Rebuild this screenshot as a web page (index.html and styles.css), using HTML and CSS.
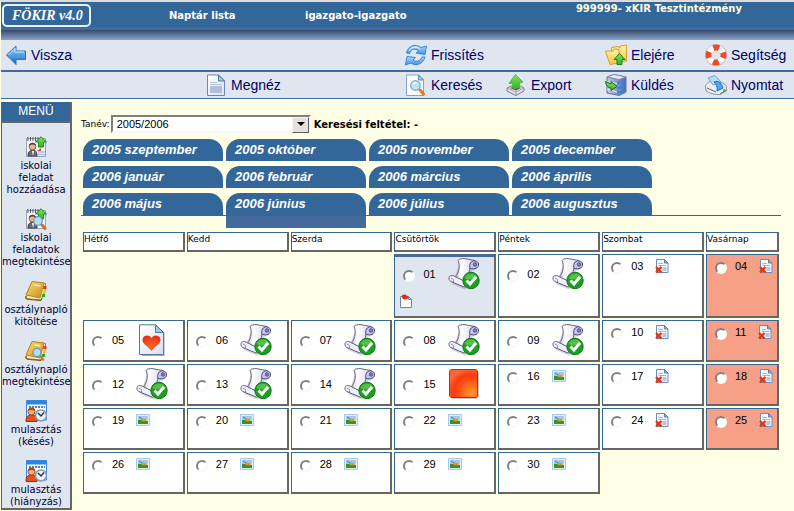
FILE: index.html
```html
<!DOCTYPE html>
<html lang="hu">
<head>
    <meta charset="UTF-8">
    <meta name="viewport" content="width=device-width, initial-scale=1.0">
    <title>FÖKIR v4.0 - Naptár lista</title>
    <link rel="stylesheet" href="styles.css">
</head>
<body>
    <!-- Icon set -->
    <svg class="icon-set" aria-hidden="true">
        <defs>
            <linearGradient id="g-blue" x1="0" y1="0" x2="0" y2="1"><stop offset="0" stop-color="#9bd4fb"/><stop offset="1" stop-color="#1368c4"/></linearGradient>
            <linearGradient id="g-sky" x1="0" y1="0" x2="0" y2="1"><stop offset="0" stop-color="#b4dffc"/><stop offset="1" stop-color="#3c93e4"/></linearGradient>
            <linearGradient id="g-gold" x1="0" y1="0" x2="0" y2="1"><stop offset="0" stop-color="#fff3a0"/><stop offset="1" stop-color="#f3c544"/></linearGradient>
            <linearGradient id="g-book" x1="0" y1="0" x2="1" y2="1"><stop offset="0" stop-color="#fbe27c"/><stop offset="1" stop-color="#c98a12"/></linearGradient>
            <linearGradient id="g-green" x1="0" y1="0" x2="0" y2="1"><stop offset="0" stop-color="#8be05c"/><stop offset="1" stop-color="#2fb52a"/></linearGradient>
            <linearGradient id="g-page" x1="0" y1="0" x2="1" y2="1"><stop offset="0" stop-color="#ffffff"/><stop offset="1" stop-color="#d5e2f4"/></linearGradient>
            <linearGradient id="g-paper" x1="0" y1="0" x2="1" y2="0"><stop offset="0" stop-color="#b9b9d0"/><stop offset="0.35" stop-color="#ffffff"/><stop offset="1" stop-color="#d2d2e4"/></linearGradient>
            <linearGradient id="g-server" x1="0" y1="0" x2="1" y2="0"><stop offset="0" stop-color="#c4cbe4"/><stop offset="1" stop-color="#5566a0"/></linearGradient>
            <radialGradient id="g-red" cx="0.8" cy="0.85" r="0.9"><stop offset="0" stop-color="#ff9a30"/><stop offset="0.45" stop-color="#ff5a18"/><stop offset="0.75" stop-color="#fb3a0c"/><stop offset="1" stop-color="#f8683c"/></radialGradient>
            <radialGradient id="g-heart" cx="0.5" cy="0.7" r="0.7"><stop offset="0" stop-color="#ff6a20"/><stop offset="1" stop-color="#ee2a10"/></radialGradient>
        </defs>
        <symbol id="i-back" viewBox="0 0 22 22">
            <path d="M1.500 11 11 2V7H20.500V15.500H11V20.500Z" fill="url(#g-blue)" stroke="#2a74c8"/>
            <path d="M3.500 11 10 4.500V8H19" fill="none" stroke="#c6e6ff"/>
        </symbol>
        <symbol id="i-refresh" viewBox="0 0 22 22">
            <path d="M1.500 9C3 2 10 -1 16 3.500L21.500 2 20 10.500 11 9 14 7C10 4 6 4.500 4.500 9.500Z" fill="url(#g-sky)" stroke="#3583d6"/>
            <path d="M20 13C18 20 11 22.500 6 19L.5 21 2 12.500 10.500 13.500 8 16C11 18.500 15 17.500 17 13Z" fill="url(#g-sky)" stroke="#3583d6"/>
            <path d="M4 7C7 2.500 12 2 15 5" fill="none" stroke="#e2f4ff"/>
        </symbol>
        <symbol id="i-up" viewBox="0 0 22 22">
            <path d="M6.500 3.500 13 2.500 15 4V2L21.500 1V17L8 19Z" fill="url(#g-gold)" stroke="#d2a02c"/>
            <path d="M.5 7H8L9.500 5 14 5.500V19L5 20.500Z" fill="url(#g-gold)" stroke="#d2a02c"/>
            <path d="M14.500 9.500 20 15.500H17V20.500H12V15.500H9Z" fill="url(#g-green)" stroke="#16801a"/>
        </symbol>
        <symbol id="i-help" viewBox="0 0 22 22">
            <circle cx="11" cy="11" r="7.700" fill="none" stroke="#b8b8c4" stroke-width="6.600"/>
            <circle cx="11" cy="11" r="7.500" fill="none" stroke="#fcfcfc" stroke-width="5.800"/>
            <circle cx="11" cy="11" r="7.500" fill="none" stroke="#f0482a" stroke-width="5.800" stroke-dasharray="5.890 5.890" stroke-dashoffset="2.900"/>
        </symbol>
        <symbol id="i-page" viewBox="0 0 22 22">
            <path d="M2.500 1H13.500L19.500 7V21.500H2.500Z" fill="url(#g-page)" stroke="#6f86ae"/>
            <path d="M13.500 1V7H19.500Z" fill="#a9cbe6" stroke="#4c7294"/>
            <path d="M5 8.500H12M5 10.500H17" stroke="#b9c4dc"/>
            <path d="M5 12H17V19H5Z" fill="#b0bedf"/>
        </symbol>
        <symbol id="i-search" viewBox="0 0 22 22">
            <path d="M1.500 1H13.500L18.500 6V21.500H1.500Z" fill="#fff" stroke="#7fa6cc"/>
            <path d="M13.500 1V6H18.500Z" fill="#a9cbe6" stroke="#5c8cb4"/>
            <path d="M15 16 18.500 20" stroke="#e8741c" stroke-width="3" stroke-linecap="round"/>
            <circle cx="10.500" cy="11.500" r="4.800" fill="#c2e2f8" stroke="#7ba8cc" stroke-width="1.200"/>
            <path d="M8 10.500A3 3 0 0 1 11.500 9" fill="none" stroke="#fff" stroke-width="1.500"/>
        </symbol>
        <symbol id="i-export" viewBox="0 0 22 22">
            <path d="M2 14 11 10 19 14V17L11 21.500 2 17Z" fill="#e2e2e5" stroke="#7c7c82"/>
            <path d="M2 14 11 18 19 14M11 18V21" fill="none" stroke="#a0a0a6"/>
            <path d="M5 14 11 11.500 16 14 11 16.500Z" fill="#5c5c62"/>
            <path d="M10.500.5 18 8 14.500 9V13L9 14.500 7.500 13V9.500L4 9.500Z" fill="url(#g-green)" stroke="#4fbe44"/>
        </symbol>
        <symbol id="i-send" viewBox="0 0 22 22">
            <path d="M2 3 9 .5 21 3V18L14 21.500 2 19Z" fill="url(#g-server)" stroke="#6670a0"/>
            <path d="M2 3 14 5.500 21 3 9 .5Z" fill="#e9ecf8" stroke="#8088b0"/>
            <path d="M12 9 21 7.500M12 14 21 12.500M12 18.500 21 17" stroke="#2a86f0" stroke-width="1.800"/>
            <path d="M2 7.500 12 9.500M2 15 12 18" stroke="#e9ecf8"/>
            <path d="M.5 7.500 6 10V7.500L12 12.500 6 16.500V14C3 14 1 11 .5 7.500Z" fill="url(#g-green)" stroke="#137018"/>
        </symbol>
        <symbol id="i-print" viewBox="0 0 22 22">
            <path d="M.5 12C2 8 6 7 10 7L18 9C21 10 22 13 21.500 17L15 20.500C9 21 4 19 1 17Z" fill="#ececf0" stroke="#9494a0"/>
            <path d="M3 4 10 1.500 16 8 8 11Z" fill="#b8dcf8" stroke="#7ba4cc"/>
            <path d="M9 8C13 6 17 9 18 14L12 17C13 13 11 10 9 8Z" fill="#4ba7ef" stroke="#1e6fc0"/>
            <path d="M2 14 11 18M15 20 21 16" stroke="#66666e"/>
            <circle cx="19" cy="16" r="1" fill="#2fae30"/>
        </symbol>
        <symbol id="i-planner" viewBox="0 0 22 22">
            <path d="M1.500 2.500H20.500V20.500H1.500Z" fill="#f2f4fb" stroke="#9a9ebc"/>
            <path d="M3 1V5M5.500 1V5M8 1V5M10.500 1V5M13 1V5" stroke="#55555f"/>
            <path d="M3 20C3 15 5 14.500 8 14.500S12 16 12 20Z" fill="#6a6e78" stroke="#3e4148"/>
            <path d="M7 15H9L8 20Z" fill="#fff"/>
            <circle cx="7.500" cy="10.500" r="3.400" fill="#f2b080" stroke="#96603a"/>
            <path d="M4 10C4 6 11 6 11 10 9 8 6 8 4 10Z" fill="#3c3c44"/>
        </symbol>
        <symbol id="i-task-add" viewBox="0 0 22 22">
            <use href="#i-planner"/>
            <path d="M13 16H20M13 18.500H20" stroke="#a9bee6" stroke-width="1.500"/>
            <path d="M12 15 16 12V15Z" fill="#e33a1c"/>
            <path d="M16 .8 21.500 6H18.500V11H13.500V6H10.500Z" fill="url(#g-green)" stroke="#16901a"/>
        </symbol>
        <symbol id="i-task-view" viewBox="0 0 22 22">
            <use href="#i-planner"/>
            <path d="M16 .8 21.500 6H18.500V11H13.500V6H10.500Z" fill="url(#g-green)" stroke="#16901a"/>
            <path d="M17 17 20 20.500" stroke="#e06a18" stroke-width="3" stroke-linecap="round"/>
            <circle cx="13" cy="13" r="4.300" fill="#b9dcf6" stroke="#6a9cc8" stroke-width="1.300"/>
        </symbol>
        <symbol id="i-book" viewBox="0 0 22 22">
            <path d="M7 2 20.500 3.500 20 11 16 20 1 18.500Z" fill="#fbf6e0" stroke="#a07a1e"/>
            <path d="M7 1.500 19 3 15 18 1 15Z" fill="url(#g-book)" stroke="#b8841a"/>
            <path d="M9.500 5 15.500 5.700" stroke="#fdf2bc" stroke-width="1.500"/>
            <path d="M1 16C0 19 2 19.500 4 19.500L16 20.500 17 18" fill="none" stroke="#7a520a"/>
            <path d="M18.500 6H21.500V9H18Z" fill="#e43a1e"/>
            <path d="M18 10H21V13H17.500Z" fill="#f5c71a"/>
            <path d="M17 14H20V17H16.500Z" fill="#33a62c"/>
        </symbol>
        <symbol id="i-book-view" viewBox="0 0 22 22">
            <use href="#i-book"/>
            <path d="M15 16 18 19.500" stroke="#d87818" stroke-width="2.500" stroke-linecap="round"/>
            <circle cx="12" cy="12.500" r="4" fill="#b4def8" stroke="#5c98c4" stroke-width="1.200"/>
        </symbol>
        <symbol id="i-absence" viewBox="0 0 22 22">
            <path d="M1.500.5H21.500V20H1.500Z" fill="#fff" stroke="#3f86d8"/>
            <path d="M1.500.5H21.500V4.500H1.500Z" fill="#2a86e4"/>
            <path d="M4 7H20" stroke="#204d94" stroke-width="1.500" stroke-dasharray="2 1"/>
            <path d="M1 21.500C1 16 3 15 6.500 15S12 16 12 21.500Z" fill="#e8501c" stroke="#98300e"/>
            <circle cx="6.500" cy="11.500" r="3.600" fill="#f4b080" stroke="#a8481c"/>
            <path d="M3 11C3 7 10 7 10 11 8 9.500 5 9.500 3 11Z" fill="#b44414"/>
            <circle cx="16" cy="15.500" r="5.500" fill="#e8f2f8" stroke="#7f9cb4" stroke-width="1.500"/>
            <path d="M13 13 16 16 19 12.500" fill="none" stroke="#28384c" stroke-width="1.500"/>
        </symbol>
        <symbol id="i-scroll" viewBox="0 0 32 32">
            <path d="M12 4 28 5 31 9 27 12 24 13V27L17 31.500 4 26Z" fill="#77758c" opacity="0.300"/>
            <path d="M10 2.500C11 .5 14 .5 17 .7L27 2.500C24 4 22.500 8 21.500 12C20 18 20 24 20 28L6 21C10 17 13 9 10 2.500Z" fill="url(#g-paper)" stroke="#6a6884"/>
            <path d="M22.500 5C24 2 30 2 30.500 6C31 10 27 11.500 22 10.500C21.500 8.500 21.500 7 22.500 5Z" fill="#c6c6ee" stroke="#4b4978"/>
            <circle cx="27" cy="6.500" r="1.800" fill="#7f7dae" stroke="#4b4978" stroke-width="0.800"/>
            <path d="M1 20.500C.5 17.500 4 17 6 18L17 23.500C19.500 25 19 29.500 16 29L4 24C2 23.500 1 22 1 20.500Z" fill="#f0f0fa" stroke="#5c5a7a"/>
            <path d="M3 20C5 20.500 6 22 5.500 24" fill="none" stroke="#8583a6"/>
            <circle cx="23" cy="22.500" r="8.200" fill="#18a01e" stroke="#11761a"/>
            <path d="M16.500 20A7 7 0 0 1 29.500 20C26 22 20 22 16.500 20Z" fill="#7ad468" opacity="0.600"/>
            <path d="M18.500 22.500 22 26 28 19" fill="none" stroke="#fff" stroke-width="3"/>
        </symbol>
        <symbol id="i-heart" viewBox="0 0 32 32">
            <path d="M6 3H22L28.500 9V32H6Z" fill="#5c6c7c" opacity="0.600"/>
            <path d="M3.500.8H19.500L27.500 8.500V30.500H3.500Z" fill="url(#g-page)" stroke="#5a7896"/>
            <path d="M19.500.8V8.500H27.500Z" fill="#9ccbe8" stroke="#4f7b9c"/>
            <path d="M15.500 27C12 22 6 20 6.500 15.500 7 11 13 10 15.500 14 18 10 24 11 24.500 15.500 25 20 19 22 15.500 27Z" fill="url(#g-heart)"/>
        </symbol>
        <symbol id="i-red" viewBox="0 0 32 32">
            <rect x="3" y="3" width="28" height="28" rx="3" fill="#907060" opacity="0.400"/>
            <rect x="1.500" y="1.500" width="28" height="28" rx="2.500" fill="url(#g-red)" stroke="#c2281a"/>
        </symbol>
        <symbol id="i-photo" viewBox="0 0 14 14">
            <path d="M.5 1.500H13.500V12.500H.5Z" fill="#e4f0fc" stroke="#a8c4ec"/>
            <path d="M2 3H12V7H2Z" fill="#96cdf0"/>
            <path d="M2 7 6 7 12 8V11H2Z" fill="#2f9626"/>
            <path d="M3 4 6 6" stroke="#64707c"/>
            <path d="M5 7C6 5 10 5 10.500 7.500 9 9 7 9 5 7Z" fill="#f98a22"/>
        </symbol>
        <symbol id="i-absent" viewBox="0 0 14 14">
            <path d="M1.500.5H9.500L13 4V13.500H1.500Z" fill="#f4f7fd" stroke="#6f8cba"/>
            <path d="M9.500.5V4H13Z" fill="#9db9de" stroke="#5b7cb0"/>
            <path d="M3.500 4.500H8M3.500 6.500H11" stroke="#9fb3d6"/>
            <path d="M7.500 8H11.500V12H7.500Z" fill="#b3c6e8"/>
            <path d="M1 8 6.500 13.500M6.500 8 1 13.500" stroke="#dc3810" stroke-width="2.400"/>
        </symbol>
        <symbol id="i-note" viewBox="0 0 14 14">
            <path d="M1.500 2.500H9.500L12.500 5.500V13.500H1.500Z" fill="#fff" stroke="#6888b4"/>
            <path d="M9.500 2.500V5.500H12.500" fill="none" stroke="#6888b4"/>
            <path d="M3 1 6 .5 9.500 2.500 8.500 5 5 5.500 3 4Z" fill="#e02c12"/>
        </symbol>
    </svg>

    <header class="banner">
        <div class="logo">FÖKIR v4.0</div>
        <h1>Naptár lista</h1>
        <div class="user">igazgato-igazgato</div>
        <div class="school">999999- xKIR Tesztintézmény</div>
    </header>

    <div class="toolbar toolbar-main">
        <button type="button" class="col-1"><svg><use href="#i-back"/></svg>Vissza</button>
        <button type="button" class="col-5"><svg><use href="#i-refresh"/></svg>Frissítés</button>
        <button type="button" class="col-7"><svg><use href="#i-up"/></svg>Elejére</button>
        <button type="button" class="col-8"><svg><use href="#i-help"/></svg>Segítség</button>
    </div>
    <div class="toolbar">
        <button type="button" class="col-3"><svg><use href="#i-page"/></svg>Megnéz</button>
        <button type="button" class="col-5"><svg><use href="#i-search"/></svg>Keresés</button>
        <button type="button" class="col-6"><svg><use href="#i-export"/></svg>Export</button>
        <button type="button" class="col-7"><svg><use href="#i-send"/></svg>Küldés</button>
        <button type="button" class="col-8"><svg><use href="#i-print"/></svg>Nyomtat</button>
    </div>

    <div class="page">
        <nav class="menu">
            <h2>MENÜ</h2>
            <a href="#"><svg><use href="#i-task-add"/></svg>iskolai<br>feladat<br>hozzáadása</a>
            <a href="#"><svg><use href="#i-task-view"/></svg>iskolai<br>feladatok<br>megtekintése</a>
            <a href="#"><svg><use href="#i-book"/></svg>osztálynapló<br>kitöltése</a>
            <a href="#"><svg><use href="#i-book-view"/></svg>osztálynapló<br>megtekintése</a>
            <a href="#"><svg><use href="#i-absence"/></svg>mulasztás<br>(késés)</a>
            <a href="#"><svg><use href="#i-absence"/></svg>mulasztás<br>(hiányzás)</a>
        </nav>

        <main class="content">
            <div class="filter">
                <label for="tanev">Tanév:</label>
                <span class="select-box">
                    <select id="tanev">
                        <option>2005/2006</option>
                    </select>
                </span>
                <strong>Keresési feltétel: -</strong>
            </div>

            <nav class="months">
                <a href="#">2005 szeptember</a>
                <a href="#">2005 október</a>
                <a href="#">2005 november</a>
                <a href="#">2005 december</a>
                <a href="#">2006 január</a>
                <a href="#">2006 február</a>
                <a href="#">2006 március</a>
                <a href="#">2006 április</a>
                <a href="#">2006 május</a>
                <a href="#">2006 június</a>
                <a href="#">2006 július</a>
                <a href="#">2006 augusztus</a>
            </nav>
            <div class="month-marker"><span></span></div>

            <table class="calendar">
                <thead>
                    <tr>
                        <th>Hétfő</th>
                        <th>Kedd</th>
                        <th>Szerda</th>
                        <th>Csütörtök</th>
                        <th>Péntek</th>
                        <th>Szombat</th>
                        <th class="sunday-head">Vasárnap</th>
                    </tr>
                </thead>
                <tbody>
                    <tr class="tall">
                        <td class="empty" colspan="3"></td>
                        <td class="today">
                            <label><input type="radio" name="nap"><span>01</span><svg class="big"><use href="#i-scroll"/></svg></label>
                            <svg class="note"><use href="#i-note"/></svg>
                        </td>
                        <td><label><input type="radio" name="nap"><span>02</span><svg class="big"><use href="#i-scroll"/></svg></label></td>
                        <td><label><input type="radio" name="nap"><span>03</span><svg><use href="#i-absent"/></svg></label></td>
                        <td class="sunday"><label><input type="radio" name="nap"><span>04</span><svg><use href="#i-absent"/></svg></label></td>
                    </tr>
                    <tr>
                        <td><label><input type="radio" name="nap"><span>05</span><svg class="big"><use href="#i-heart"/></svg></label></td>
                        <td><label><input type="radio" name="nap"><span>06</span><svg class="big"><use href="#i-scroll"/></svg></label></td>
                        <td><label><input type="radio" name="nap"><span>07</span><svg class="big"><use href="#i-scroll"/></svg></label></td>
                        <td><label><input type="radio" name="nap"><span>08</span><svg class="big"><use href="#i-scroll"/></svg></label></td>
                        <td><label><input type="radio" name="nap"><span>09</span><svg class="big"><use href="#i-scroll"/></svg></label></td>
                        <td><label><input type="radio" name="nap"><span>10</span><svg><use href="#i-absent"/></svg></label></td>
                        <td class="sunday"><label><input type="radio" name="nap"><span>11</span><svg><use href="#i-absent"/></svg></label></td>
                    </tr>
                    <tr>
                        <td><label><input type="radio" name="nap"><span>12</span><svg class="big"><use href="#i-scroll"/></svg></label></td>
                        <td><label><input type="radio" name="nap"><span>13</span><svg class="big"><use href="#i-scroll"/></svg></label></td>
                        <td><label><input type="radio" name="nap"><span>14</span><svg class="big"><use href="#i-scroll"/></svg></label></td>
                        <td><label><input type="radio" name="nap"><span>15</span><svg class="big"><use href="#i-red"/></svg></label></td>
                        <td><label><input type="radio" name="nap"><span>16</span><svg><use href="#i-photo"/></svg></label></td>
                        <td><label><input type="radio" name="nap"><span>17</span><svg><use href="#i-absent"/></svg></label></td>
                        <td class="sunday"><label><input type="radio" name="nap"><span>18</span><svg><use href="#i-absent"/></svg></label></td>
                    </tr>
                    <tr>
                        <td><label><input type="radio" name="nap"><span>19</span><svg><use href="#i-photo"/></svg></label></td>
                        <td><label><input type="radio" name="nap"><span>20</span><svg><use href="#i-photo"/></svg></label></td>
                        <td><label><input type="radio" name="nap"><span>21</span><svg><use href="#i-photo"/></svg></label></td>
                        <td><label><input type="radio" name="nap"><span>22</span><svg><use href="#i-photo"/></svg></label></td>
                        <td><label><input type="radio" name="nap"><span>23</span><svg><use href="#i-photo"/></svg></label></td>
                        <td><label><input type="radio" name="nap"><span>24</span><svg><use href="#i-absent"/></svg></label></td>
                        <td class="sunday"><label><input type="radio" name="nap"><span>25</span><svg><use href="#i-absent"/></svg></label></td>
                    </tr>
                    <tr>
                        <td><label><input type="radio" name="nap"><span>26</span><svg><use href="#i-photo"/></svg></label></td>
                        <td><label><input type="radio" name="nap"><span>27</span><svg><use href="#i-photo"/></svg></label></td>
                        <td><label><input type="radio" name="nap"><span>28</span><svg><use href="#i-photo"/></svg></label></td>
                        <td><label><input type="radio" name="nap"><span>29</span><svg><use href="#i-photo"/></svg></label></td>
                        <td><label><input type="radio" name="nap"><span>30</span><svg><use href="#i-photo"/></svg></label></td>
                        <td class="empty" colspan="2"></td>
                    </tr>
                </tbody>
            </table>
        </main>
    </div>
</body>
</html>
```

FILE: styles.css
```css
* {
    box-sizing: border-box;
}

body {
    margin: 0;
    padding-left: 1px;
    border-top: 2px solid #dcdcdc;
    background-color: #ffffe5;
    font-family: "DejaVu Sans", Verdana, sans-serif;
    font-size: 10px;
    color: #000;
}

a {
    text-decoration: none;
}

.icon-set {
    position: absolute;
    width: 0;
    height: 0;
}

/* Header */
.banner {
    display: grid;
    grid-template-columns: 168px 136px 1fr auto;
    align-items: center;
    height: 38px;
    padding: 0 52px 12px 0;
    background: linear-gradient(#336699 25px, #446a9c 25px, #446a9c 28px, #34496b 28px, #8ba3c8 38px);
    color: #fff;
    font-weight: bold;
}

.banner h1 {
    margin: 0;
    font-size: 10px;
}

.logo {
    justify-self: start;
    margin-left: 1px;
    padding: 0 6px 0 8px;
    border: 2px solid #e8f0f8;
    border-radius: 5px;
    font-family: "Liberation Serif", "Times New Roman", serif;
    font-size: 14px;
    font-style: italic;
    line-height: 19px;
    white-space: nowrap;
}

.school {
    align-self: start;
    padding-top: 1px;
    color: #ffffe5;
}

/* Toolbars */
.toolbar {
    display: grid;
    grid-template-columns: repeat(7, 1fr) 89px;
    align-items: center;
    height: 27px;
    padding-left: 4px;
    background-color: #dfe6f0;
    border-bottom: 1px solid #446a9c;
}

.toolbar-main {
    height: 32px;
    border-bottom-width: 2px;
}

.toolbar button {
    display: flex;
    align-items: center;
    gap: 4px;
    padding: 0;
    border: none;
    background: none;
    color: #000066;
    font-family: "Liberation Sans", Arial, sans-serif;
    font-size: 14px;
    cursor: pointer;
}

.toolbar svg,
.menu svg {
    width: 22px;
    height: 22px;
}

.col-1 { grid-column: 1; }
.col-3 { grid-column: 3; }
.col-5 { grid-column: 5; }
.col-6 { grid-column: 6; }
.col-7 { grid-column: 7; }
.col-8 { grid-column: 8; }

.page {
    display: flex;
    align-items: flex-start;
    padding-top: 3px;
}

/* Left menu */
.menu {
    flex: none;
    width: 71px;
    background-color: #dfe6f0;
    border-left: 1px solid #336699;
    border-right: 2px solid #666;
    border-bottom: 2px solid #666;
}

.menu h2 {
    margin: 0 0 13px;
    border-bottom: 2px solid #666;
    background-color: #336699;
    color: #fff;
    font-family: "Liberation Sans", Arial, sans-serif;
    font-size: 12px;
    font-weight: normal;
    line-height: 19px;
    text-align: center;
}

.menu a {
    display: block;
    margin-bottom: 12px;
    color: #000033;
    line-height: 12px;
    text-align: center;
}

.menu a:last-child {
    margin-bottom: 0;
}

.menu svg {
    display: block;
    margin: 0 auto 2px;
}

/* Content */
.content {
    flex: 1;
    padding: 13px 13px 0 9px;
}

.filter {
    display: flex;
    align-items: center;
    margin-bottom: 6px;
}

.filter label {
    font-size: 9px;
}

.select-box {
    position: relative;
    margin: 0 3px 0 1px;
}

.select-box select {
    display: block;
    appearance: none;
    width: 200px;
    height: 18px;
    padding: 0 20px 0 4px;
    border: 2px solid;
    border-color: #808080 #f8f8f4 #f8f8f4 #808080;
    border-radius: 0;
    background-color: #fff;
    color: #000;
    font-family: "Liberation Sans", Arial, sans-serif;
    font-size: 11px;
}

/* Drop-down button with its arrow */
.select-box::before {
    content: "";
    position: absolute;
    top: 2px;
    right: 2px;
    width: 15px;
    height: 14px;
    border: 1px solid;
    border-color: #f4f4f0 #606060 #606060 #f4f4f0;
    background-color: #e4e2dc;
    pointer-events: none;
}

.select-box::after {
    content: "";
    position: absolute;
    top: 7px;
    right: 6px;
    border: 4px solid transparent;
    border-top-color: #000;
    border-bottom: none;
    pointer-events: none;
}

.months,
.month-marker {
    display: grid;
    grid-template-columns: repeat(4, 140px);
    column-gap: 3px;
    padding-left: 2px;
}

.months {
    row-gap: 5px;
    border-bottom: 1px solid #336699;
}

.months a {
    padding-left: 9px;
    border-radius: 14px 14px 0 0;
    background-color: #336699;
    color: #fff;
    font: italic bold 13px/22px "Liberation Sans", Arial, sans-serif;
}

.month-marker span {
    grid-column: 2;
    height: 12px;
    background-color: #446a9c;
}

/* Calendar */
.calendar {
    width: 100%;
    margin-top: 2px;
    table-layout: fixed;
    border-spacing: 2px;
}

.calendar th,
.calendar td {
    border: 1px solid #336699;
    border-right: 2px solid #666;
    border-bottom: 2px solid #666;
    background-color: #fff;
    vertical-align: top;
}

.calendar th {
    height: 20px;
    padding: 1px 0 0;
    font-size: 9px;
    font-weight: normal;
    text-align: left;
}

.calendar .sunday-head {
    width: 73px;
}

.calendar td {
    height: 42px;
    padding: 3px 0 0 8px;
}

.calendar .tall td {
    height: 64px;
}

.calendar .sunday {
    background-color: #f7a088;
}

.calendar .today {
    padding-top: 1px;
    border-top: 3px solid #446a9c;
    background-color: #dfe6f0;
}

.calendar .empty {
    border: none;
    background: none;
}

.calendar label {
    display: flex;
    align-items: center;
    min-height: 16px;
    font-family: "Liberation Sans", Arial, sans-serif;
    font-size: 11px;
}

.calendar span {
    margin: 0 12px 0 8px;
}

.calendar svg {
    width: 14px;
    height: 14px;
}

.calendar .big {
    width: 32px;
    height: 32px;
}

.calendar .note {
    display: block;
    margin: 4px 0 0 -4px;
}

.calendar input {
    appearance: none;
    width: 12px;
    height: 12px;
    margin: 3px 0 0;
    border: 2px solid;
    border-color: #808080 #fafafa #fafafa #808080;
    border-radius: 50%;
    background-color: #fff;
}

.calendar input:checked {
    background: radial-gradient(#000 2px, #fff 3px);
}
```
